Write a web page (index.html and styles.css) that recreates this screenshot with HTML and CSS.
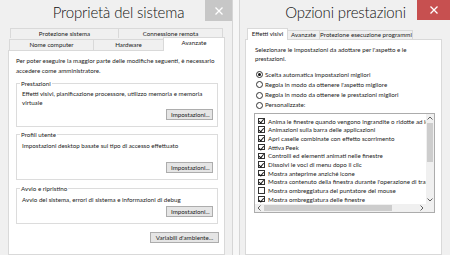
FILE: index.html
```html
<!DOCTYPE html>
<html lang="it">
<head>
  <meta charset="UTF-8">
  <title>Proprietà del sistema</title>
  <link rel="stylesheet" href="styles.css">
</head>
<body>
  <section class="window sys">
    <header class="titlebar">
      <h1 class="title">Proprietà del sistema</h1>
      <span class="close"><svg width="8" height="8" viewBox="0 0 8 8"><path d="M0.5 0.5 L7.5 7.5 M7.5 0.5 L0.5 7.5"/></svg></span>
    </header>
    <div class="client">
      <div class="tabrow back">
        <span class="tab t-prot">Protezione sistema</span>
        <span class="tab t-conn">Connessione remota</span>
      </div>
      <div class="tabrow front">
        <span class="tab t-nome">Nome computer</span>
        <span class="tab t-hw">Hardware</span>
        <span class="tab t-adv active">Avanzate</span>
      </div>
      <div class="panel">
        <p class="intro">Per poter eseguire la maggior parte delle modifiche seguenti, è necessario accedere come amministratore.</p>
        <div class="group g-perf">
          <span class="legend">Prestazioni</span>
          <p>Effetti visivi, pianificazione processore, utilizzo memoria e memoria virtuale</p>
          <button class="btn">Impostazioni...</button>
        </div>
        <div class="group g-prof">
          <span class="legend">Profili utente</span>
          <p>Impostazioni desktop basate sul tipo di accesso effettuato</p>
          <button class="btn">Impostazioni...</button>
        </div>
        <div class="group g-boot">
          <span class="legend">Avvio e ripristino</span>
          <p>Avvio del sistema, errori di sistema e informazioni di debug</p>
          <button class="btn">Impostazioni...</button>
        </div>
        <button class="btn env">Variabili d'ambiente...</button>
      </div>
    </div>
  </section>

  <section class="window perf">
    <header class="titlebar">
      <h1 class="title">Opzioni prestazioni</h1>
      <span class="close"><svg width="8" height="8" viewBox="0 0 8 8"><path d="M0.5 0.5 L7.5 7.5 M7.5 0.5 L0.5 7.5"/></svg></span>
    </header>
    <div class="client">
      <div class="tabrow single">
        <span class="tab t-eff active">Effetti visivi</span>
        <span class="tab t-av">Avanzate</span>
        <span class="tab t-dep">Protezione esecuzione programmi</span>
      </div>
      <div class="panel">
        <p class="intro">Selezionare le impostazioni da adottare per l'aspetto e le prestazioni.</p>
        <ul class="radios">
          <li><span class="radio on"></span>Scelta automatica impostazioni migliori</li>
          <li><span class="radio"></span>Regola in modo da ottenere l'aspetto migliore</li>
          <li><span class="radio"></span>Regola in modo da ottenere le prestazioni migliori</li>
          <li><span class="radio"></span>Personalizzate:</li>
        </ul>
        <div class="listbox">
          <ul class="items">
            <li><span class="chk on"></span>Anima le finestre quando vengono ingrandite o ridotte ad icona</li>
            <li><span class="chk on"></span>Animazioni sulla barra delle applicazioni</li>
            <li><span class="chk on"></span>Apri caselle combinate con effetto scorrimento</li>
            <li><span class="chk on"></span>Attiva Peek</li>
            <li><span class="chk on"></span>Controlli ed elementi animati nelle finestre</li>
            <li><span class="chk on"></span>Dissolvi le voci di menu dopo il clic</li>
            <li><span class="chk on"></span>Mostra anteprime anziché icone</li>
            <li><span class="chk on"></span>Mostra contenuto della finestra durante l'operazione di trascinamento</li>
            <li><span class="chk"></span>Mostra ombreggiatura del puntatore del mouse</li>
            <li><span class="chk on"></span>Mostra ombreggiatura delle finestre</li>
          </ul>
          <div class="vscroll">
            <span class="arrow"><svg width="6" height="4" viewBox="0 0 6 4"><path d="M0.5 3.5 L3 1 L5.5 3.5"/></svg></span>
            <span class="thumb"></span>
            <span class="arrow"><svg width="6" height="4" viewBox="0 0 6 4"><path d="M0.5 0.5 L3 3 L5.5 0.5"/></svg></span>
          </div>
          <div class="hscroll">
            <span class="arrow"><svg width="4" height="6" viewBox="0 0 4 6"><path d="M3.5 0.5 L1 3 L3.5 5.5"/></svg></span>
            <span class="thumb"></span>
            <span class="arrow"><svg width="4" height="6" viewBox="0 0 4 6"><path d="M0.5 0.5 L3 3 L0.5 5.5"/></svg></span>
          </div>
          <div class="corner"></div>
        </div>
      </div>
    </div>
  </section>
</body>
</html>
```

FILE: styles.css
```css
/* Reset */
* { margin: 0; padding: 0; box-sizing: border-box; }
body {
  width: 450px;
  height: 255px;
  overflow: hidden;
  display: flex;
  background: #f7f7f7;
  font-family: Lato, "Liberation Sans", sans-serif;
  font-size: 6.2px;
  color: #1b1b1b;
}
ul { list-style: none; }

/* Windows */
.window { height: 255px; display: flex; flex-direction: column; background: #f0f0f0; }
.sys { width: 233px; border-right: 1px solid #d6d6d6; }
.perf { flex: 1; margin-left: 6px; border-left: 1px solid #d6d6d6; }

.titlebar { height: 26px; display: flex; align-items: flex-start; }
.title { flex: 1; font-size: 15px; font-weight: 300; letter-spacing: -0.15px; line-height: 25px; text-align: center; color: #111; white-space: nowrap; }
.sys .title { padding-left: 32px; }
.perf .title { padding-left: 34px; }
.close { width: 27px; height: 21px; background: #c7c7c7; display: flex; align-items: center; justify-content: center; }
.perf .close { width: 33px; height: 20px; background: #c75050; }
.close path { stroke: #fff; stroke-width: 1.3; fill: none; }

.client { flex: 1; display: flex; flex-direction: column; padding: 2px 7px 0 8px; }
.perf .client { padding: 2px 8px 0 5px; }

/* Tabs */
.tabrow { display: flex; }
.tab { border: 1px solid #d9d9d9; border-bottom: none; background: #f0f0f0; text-align: center; line-height: 9px; margin-right: -1px; white-space: nowrap; }
.back { height: 10px; padding-left: 2px; }
.back .tab { height: 10px; }
.front { height: 12px; align-items: flex-end; padding-left: 1px; }
.front .tab { height: 11px; }
.tab.active { background: #fff; position: relative; z-index: 1; margin-bottom: -1px; }
.front .tab.active { height: 14px; line-height: 10px; }
.t-prot { width: 109px; }
.t-conn { width: 105px; }
.t-nome { width: 85px; }
.t-hw { width: 71px; }
.t-adv { width: 62px; }

.single { height: 11px; align-items: flex-end; padding-left: 2px; }
.single .tab { height: 9px; line-height: 8px; }
.single .tab.active { height: 12px; line-height: 10px; }
.t-eff { width: 41px; }
.t-av { width: 33px; }
.t-dep { width: 94px; }

.panel { flex: 1; background: #fff; border: 1px solid #d9d9d9; padding: 5px 6px 0 7px; line-height: 9.5px; }
.perf .panel { padding: 5px 6px 0 9px; line-height: 9px; }

/* Groups */
.group { border: 1px solid #dcdcdc; padding: 0 4px 6px 5px; line-height: 9px; }
.legend { display: block; width: fit-content; margin: -5px 0 0 -2px; padding: 0 1px; background: #fff; }
.g-perf { margin-top: 8px; }
.g-perf p { margin-top: 1px; }
.g-perf .btn { margin-top: 2px; }
.g-prof { margin-top: 7px; }
.g-prof p { margin-top: 2px; }
.g-prof .btn { margin-top: 12px; }
.g-boot { margin-top: 8px; }
.g-boot p { margin-top: 2px; }
.g-boot .btn { margin-top: 2px; }

.btn {
  display: block;
  margin-left: auto;
  height: 11px;
  padding: 0 4px;
  border: 1px solid #adadad;
  background: #e5e5e5;
  font: inherit;
  line-height: 9px;
  color: #1b1b1b;
}
.group .btn { width: 47px; }
.env { width: 69px; margin-top: 8px; margin-right: -1px; }

/* Radios */
.radios { margin-top: 6.5px; line-height: 10.3px; }
.radios li { display: flex; align-items: center; gap: 2px; margin-left: 1px; }
.radio { width: 7px; height: 7px; border: 1px solid #333; border-radius: 50%; display: flex; align-items: center; justify-content: center; }
.radio.on::after { content: ''; width: 3px; height: 3px; border-radius: 50%; background: #111; }

/* List box */
.listbox {
  margin: 2px 0 0 -1px;
  width: 181px;
  height: 100px;
  border: 1px solid #acacac;
  display: grid;
  grid-template-columns: 1fr 8px;
  grid-template-rows: 1fr 8px;
}
.items { padding-top: 3px; overflow: hidden; }
.items li { display: flex; align-items: center; gap: 3.5px; height: 8.7px; padding-left: 3px; white-space: nowrap; }
.chk { flex: none; position: relative; width: 6.5px; height: 6.5px; border: 1px solid #333; background: #fff; }
.chk.on::after {
  content: '';
  position: absolute;
  left: 1.3px;
  top: -0.3px;
  width: 1.8px;
  height: 3.6px;
  border: solid #111;
  border-width: 0 1.2px 1.2px 0;
  transform: rotate(40deg);
}
.vscroll { background: #f0f0f0; display: flex; flex-direction: column; }
.vscroll .arrow { height: 8px; display: flex; align-items: center; justify-content: center; }
.vscroll .thumb { height: 39px; margin: 1px 1px auto; background: #cdcdcd; }
.hscroll { background: #f0f0f0; display: flex; }
.hscroll .arrow { width: 8px; display: flex; align-items: center; justify-content: center; }
.hscroll .thumb { width: 128px; margin: 1px auto 1px 1px; background: #cdcdcd; }
.corner { background: #f0f0f0; }
.arrow path { stroke: #606060; stroke-width: 1; fill: none; }
```
